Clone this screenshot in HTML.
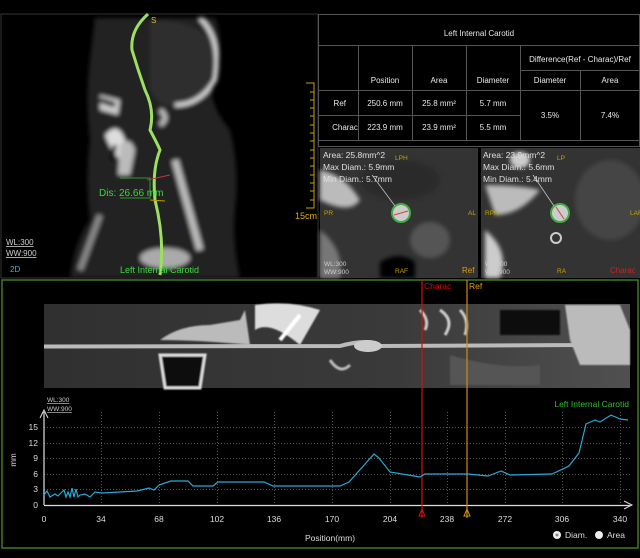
<!DOCTYPE html><html><head><style>
body{margin:0;background:#000;width:640px;height:558px;overflow:hidden;font-family:"Liberation Sans",sans-serif;position:relative}
.a{position:absolute}
</style></head><body>
<svg class="a" style="left:0;top:0" width="640" height="558" viewBox="0 0 640 558">
<defs>
<filter id="bl"><feGaussianBlur stdDeviation="2"/></filter>
<filter id="bl1"><feGaussianBlur stdDeviation="0.8"/></filter>
<linearGradient id="vg" x1="0" x2="1"><stop offset="0" stop-color="#303030"/><stop offset="0.6" stop-color="#3a3a3a"/><stop offset="1" stop-color="#505050"/></linearGradient>
</defs>
<rect x="0" y="14" width="318" height="264" fill="#000"/>
<rect x="1" y="14" width="317" height="264" fill="none" stroke="#333"/>
<g filter="url(#bl)">
<path d="M95 18 L215 18 Q225 40 215 80 Q205 100 230 130 Q240 170 235 210 Q232 240 240 278 L70 278 Q75 240 90 220 Q85 180 90 140 Q85 100 90 60 Z" fill="#222"/>
<path d="M150 20 Q205 20 215 50 Q215 95 180 105 Q160 110 150 90 Z" fill="#2e2e2e"/>
<path d="M200 18 Q222 40 215 80 Q200 105 175 105" fill="none" stroke="#ddd" stroke-width="4"/>
<path d="M100 95 L120 100 L118 115 L100 110Z" fill="#ccc"/>
<path d="M100 100 L115 105" stroke="#000" stroke-width="5"/>
<path d="M105 135 Q118 120 125 140 L120 160 Q110 150 105 135Z" fill="#ddd"/>
<path d="M115 145 L112 160" stroke="#000" stroke-width="4"/>
<path d="M120 145 Q130 135 135 150 L130 175 L118 175Z" fill="#bbb"/>
<path d="M175 160 L200 250" stroke="#bbb" stroke-width="7"/>
<ellipse cx="165" cy="258" rx="25" ry="10" fill="#aaa"/>
<path d="M100 215 L80 270" stroke="#888" stroke-width="6"/>
<path d="M160 110 Q170 118 160 125" stroke="#bbb" stroke-width="5" fill="none"/>
</g>
<path d="M148 14 Q130 30 132 50 Q138 70 145 90 Q155 110 150 130 Q158 145 160 150 Q152 170 155 200 Q165 240 160 275" fill="none" stroke="#9be060" stroke-width="3"/>
<path d="M120 178 L150 178 L150 198 L120 198" fill="none" stroke="#2a9a2a" stroke-width="1"/>
<path d="M147 180 L170 175" stroke="#c33" stroke-width="1"/><path d="M150 200 L165 201" stroke="#c90" stroke-width="1"/>
<text x="99" y="196" fill="#3bd83b" font-size="10">Dis: 26.66 mm</text>
<text x="151" y="23" fill="#d4c23a" font-size="8">S</text>
<text x="120" y="273" fill="#3bd83b" font-size="9">Left Internal Carotid</text>
<text x="6" y="245" fill="#ccc" font-size="8" text-decoration="underline">WL:300</text>
<text x="6" y="256" fill="#ccc" font-size="8" text-decoration="underline">WW:900</text>
<text x="10" y="272" fill="#3ab5d0" font-size="8">2D</text>
<path d="M306 83 L314 83 L314 208 L306 208" fill="none" stroke="#c9a400" stroke-width="1"/>
<g stroke="#c9a400"><path d="M310 92h4M310 100h4M310 108h4M310 116h4M310 125h4M310 133h4M310 141h4M310 150h4M310 158h4M310 166h4M310 175h4M310 183h4M310 191h4M310 200h4"/></g>
<text x="295" y="219" fill="#e0b000" font-size="9">15cm</text>
<g stroke="#555" stroke-width="1" fill="none">
<rect x="318.5" y="14.5" width="321" height="132"/>
<path d="M318 45.5H640M318 90.5H640M318 115.5H520M318 140.5H640M358.5 45V140M412.5 45V140M466.5 45V140M520.5 45V140M580.5 70V140M520 70.5H640"/>
</g>
<g fill="#e8e8e8" font-size="8" text-anchor="middle">
<text x="479" y="36">Left Internal Carotid</text>
<text x="580" y="62">Difference(Ref - Charac)/Ref</text>
<text x="385" y="83">Position</text><text x="439" y="83">Area</text><text x="493" y="83">Diameter</text><text x="550" y="83">Diameter</text><text x="610" y="83">Area</text>
<text x="346" y="106" text-anchor="end">Ref</text><text x="385" y="106">250.6 mm</text><text x="439" y="106">25.8 mm²</text><text x="493" y="106">5.7 mm</text>
<text x="345" y="130">Charac</text><text x="385" y="130">223.9 mm</text><text x="439" y="130">23.9 mm²</text><text x="493" y="130">5.5 mm</text>
<text x="550" y="118">3.5%</text><text x="610" y="118">7.4%</text>
</g>
<rect x="320" y="148" width="158" height="130" fill="#333"/>
<rect x="481" y="148" width="159" height="130" fill="#333"/>
<g filter="url(#bl)">
<path d="M320 170 Q345 175 360 200 Q350 215 320 200Z" fill="#bbb"/>
<path d="M320 230 Q345 250 340 278 L320 278Z" fill="#777"/>
<ellipse cx="400" cy="180" rx="40" ry="20" fill="#2a2a2a"/>
<path d="M380 262 Q400 250 415 262 L415 278 L380 278Z" fill="#000"/>
<ellipse cx="430" cy="240" rx="20" ry="18" fill="#555"/>
<path d="M485 185 Q520 185 540 190 Q520 215 495 215 Z" fill="#bbb"/>
<path d="M485 230 Q510 250 500 278 L485 278Z" fill="#ccc"/>
<ellipse cx="610" cy="200" rx="35" ry="40" fill="#444"/>
<ellipse cx="520" cy="160" rx="10" ry="8" fill="#ccc"/>
</g>
<circle cx="401" cy="213" r="9" fill="#ccc" stroke="#4a4" stroke-width="2"/><path d="M394 215 L408 211" stroke="#c44"/>
<circle cx="560" cy="213" r="9" fill="#ccc" stroke="#4a4" stroke-width="2"/><path d="M556 207 L564 219" stroke="#c44"/>
<path d="M372 175 L395 206 M533 175 L554 206" stroke="#ccc" stroke-width="0.7"/>
<circle cx="556" cy="238" r="5" fill="none" stroke="#ccc" stroke-width="2"/>
<g fill="#e0e0e0" font-size="8.5"><text x="323" y="158">Area: 25.8mm^2</text><text x="323" y="170">Max Diam.: 5.9mm</text><text x="323" y="182">Min Diam.: 5.7mm</text>
<text x="483" y="158">Area: 23.9mm^2</text><text x="483" y="170">Max Diam.: 5.6mm</text><text x="483" y="182">Min Diam.: 5.4mm</text></g>
<g fill="#c9a400" font-size="6.5"><text x="395" y="160">LPH</text><text x="324" y="215">PR</text><text x="468" y="215">AL</text><text x="395" y="273">RAF</text>
<text x="557" y="160">LP</text><text x="485" y="215">RPH</text><text x="630" y="215">LAF</text><text x="557" y="273">RA</text></g>
<text x="462" y="273" fill="#e0a000" font-size="8">Ref</text><text x="610" y="273" fill="#d02020" font-size="8">Charac</text>
<g fill="#ccc" font-size="6.5"><text x="324" y="266">WL:300</text><text x="324" y="274">WW:900</text><text x="485" y="266">WL:300</text><text x="485" y="274">WW:900</text></g>
<rect x="2" y="280" width="636" height="268" fill="#000" stroke="#3f7a1f" stroke-width="1.5"/>
<rect x="44" y="304" width="586" height="84" fill="url(#vg)"/>
<g filter="url(#bl1)">
<path d="M160 340 Q180 325 210 325 L240 320 L245 310 L250 345 Q200 340 160 340Z" fill="#bbb"/>
<path d="M255 305 Q290 300 320 310 L300 345 Q270 320 255 330Z" fill="#ddd"/>
<path d="M300 315 L280 340" stroke="#fff" stroke-width="4"/>
<path d="M160 355 L165 388 L200 388 L205 355Z" fill="#111" stroke="#ddd" stroke-width="3"/>
<path d="M565 305 L620 305 L630 330 L630 365 L580 365 L570 340Z" fill="#bbb"/>
<path d="M500 310 L560 310 L560 335 L500 335Z" fill="#111"/>
<path d="M420 310 Q430 320 425 330 M440 310 Q455 320 445 335 M460 310 Q470 320 465 335" stroke="#ccc" stroke-width="3" fill="none"/>
<path d="M330 360 Q340 375 350 365" stroke="#bbb" stroke-width="3" fill="none"/>
<path d="M450 355 Q500 370 540 365 L540 385 L450 385Z" fill="#555"/>
</g>
<path d="M44 346.5 L340 346 Q370 338 380 346 L580 345 L600 340" stroke="#bbb" stroke-width="4" fill="none"/>
<ellipse cx="368" cy="346" rx="14" ry="6" fill="#ccc"/>
<g stroke="#555" stroke-dasharray="1,2" stroke-width="1">
<path d="M44 489.5H630M44 474.5H630M44 458.5H630M44 443.5H630M44 427.5H630"/>
<path d="M101.5 412V505M159.5 412V505M217.5 412V505M274.5 412V505M332.5 412V505M390.5 412V505M447.5 412V505M505.5 412V505M562.5 412V505M620.5 412V505"/>
</g>
<path d="M44 505.5H630M44 505V412" stroke="#ddd" stroke-width="1.2"/>
<path d="M40 418 L44 410 L48 418 M624 501 L632 505 L624 509" stroke="#ddd" fill="none"/>
<path d="M422 280V518" stroke="#d01010" stroke-width="1.2"/>
<path d="M467 280V518" stroke="#d08a10" stroke-width="1.2"/>
<path d="M419 516 L422 509 L425 516Z" fill="none" stroke="#d01010"/>
<path d="M464 516 L467 509 L470 516Z" fill="none" stroke="#d08a10"/>
<text x="424" y="289" fill="#d01010" font-size="8.5">Charac</text><text x="469" y="289" fill="#e0a000" font-size="8.5">Ref</text>
<path d="M44 495 L47 491 L50 497 L55 494 L58 496 L61 493 L64 490 L66 497 L68 492 L70 497 L72 488 L74 497 L76 489 L78 497 L80 495 L85 494 L90 497 L95 492 L102 493 L120 492 L137 491 L149 488 L154 490 L159 485 L171 481 L188 481 L193 486 L213 486 L218 482 L239 482 L264 482 L273 486 L340 486 L349 482 L366 463 L374 454 L379 458 L390 472 L408 475 L420 477 L425 474 L468 474 L488 476 L501 471 L510 475 L552 474 L569 466 L579 453 L586 424 L595 420 L600 422 L611 415 L620 419 L628 420" fill="none" stroke="#2aa8d8" stroke-width="1.2"/>
<g fill="#ddd" font-size="8.5" text-anchor="middle">
<text x="44" y="522">0</text><text x="101" y="522">34</text><text x="159" y="522">68</text><text x="217" y="522">102</text><text x="274" y="522">136</text><text x="332" y="522">170</text><text x="390" y="522">204</text><text x="447" y="522">238</text><text x="505" y="522">272</text><text x="562" y="522">306</text><text x="620" y="522">340</text>
<text x="330" y="541">Position(mm)</text>
</g>
<g fill="#ddd" font-size="8.5" text-anchor="end">
<text x="38" y="508">0</text><text x="38" y="492">3</text><text x="38" y="477">6</text><text x="38" y="461">9</text><text x="38" y="446">12</text><text x="38" y="430">15</text></g>
<text x="16" y="460" fill="#ddd" font-size="8" transform="rotate(-90 16 460)" text-anchor="middle">mm</text>
<g fill="#ccc" font-size="6.5" text-decoration="underline"><text x="47" y="402">WL:300</text><text x="47" y="411">WW:900</text></g>
<text x="629" y="407" fill="#2ac02a" font-size="8.5" text-anchor="end">Left Internal Carotid</text>
<circle cx="557" cy="535" r="4" fill="#eee"/><circle cx="557" cy="535" r="1.5" fill="#888"/>
<text x="565" y="538" fill="#ddd" font-size="8.5">Diam.</text>
<circle cx="599" cy="535" r="4" fill="#eee"/>
<text x="607" y="538" fill="#ddd" font-size="8.5">Area</text>
</svg>
</body></html>
